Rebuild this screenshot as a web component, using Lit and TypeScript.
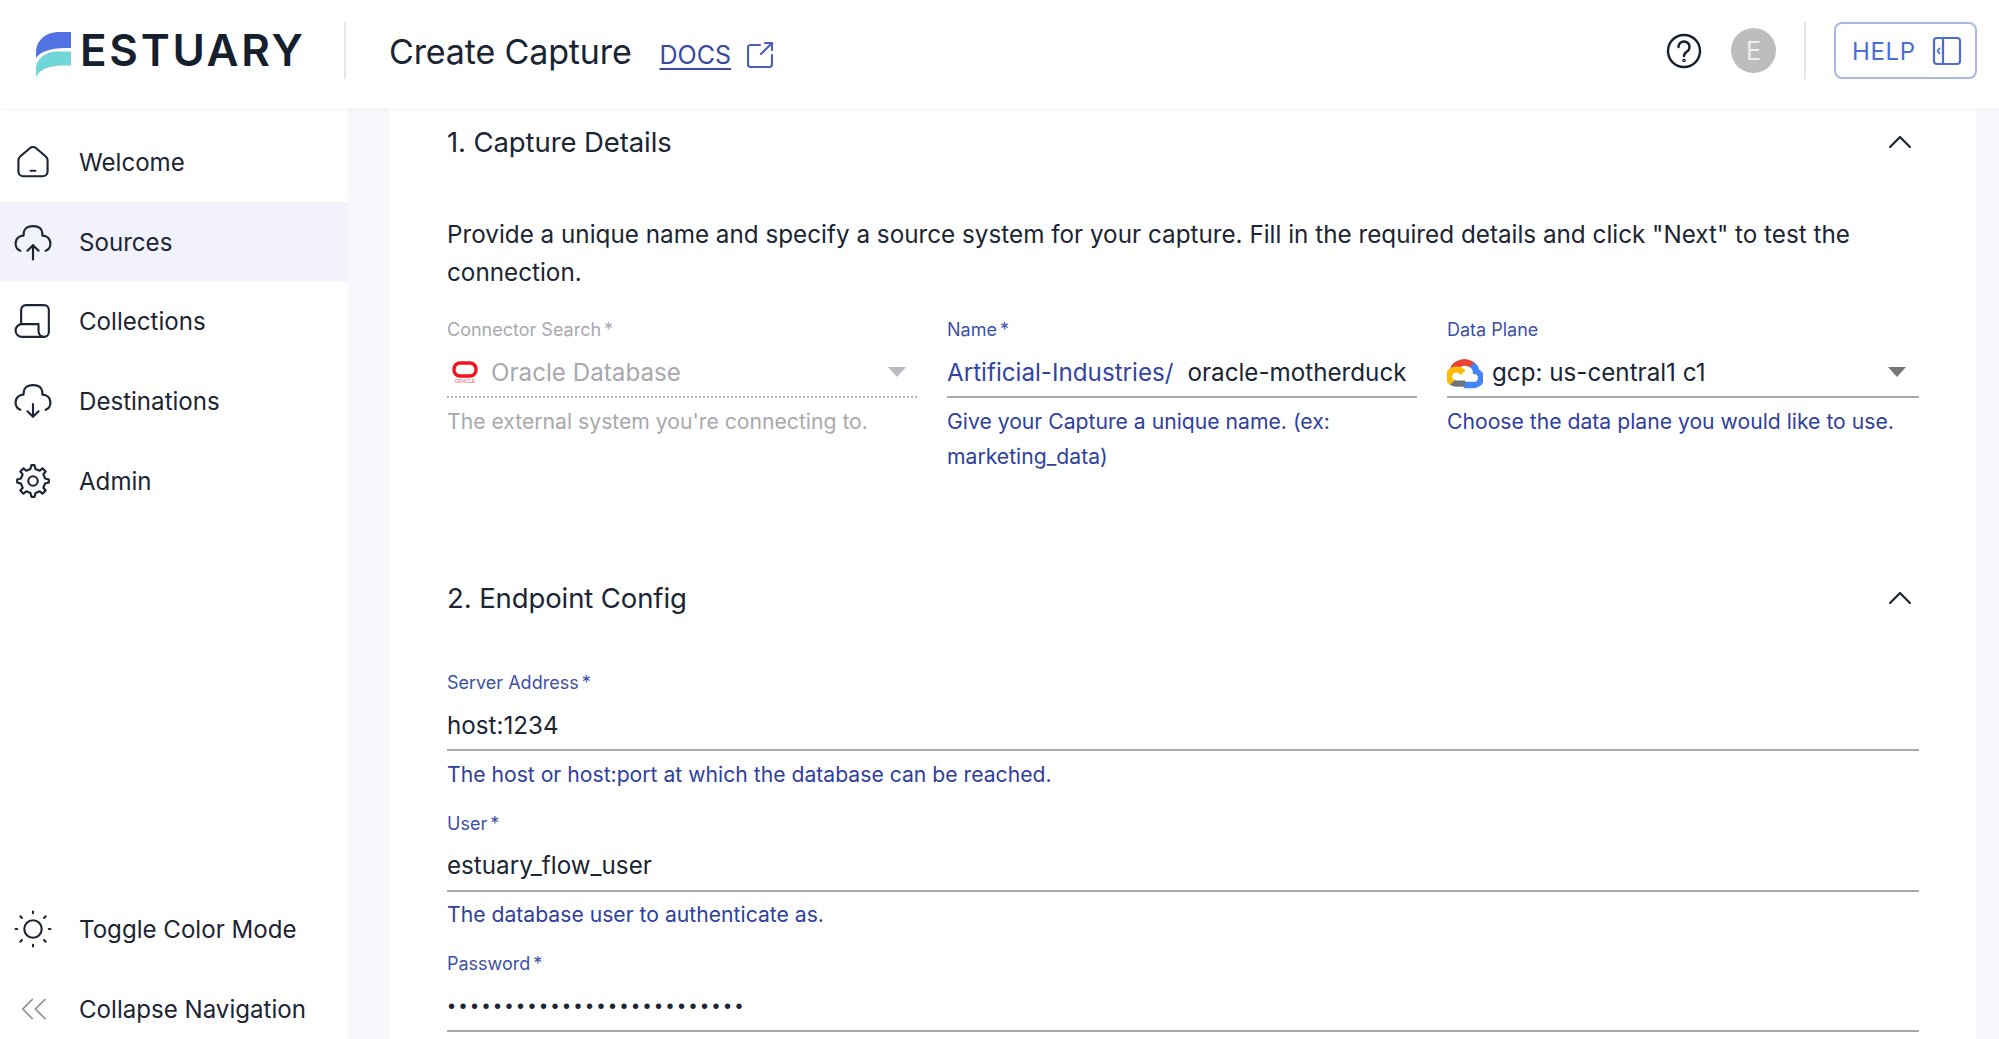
import { LitElement, html, css, svg } from "lit";
import { customElement } from "lit/decorators.js";

const icon = (body: unknown, cls = "nav-icon") =>
  html`<svg class=${cls} viewBox="0 0 24 24" fill="none" stroke="currentColor" stroke-width="1.35" stroke-linecap="round" stroke-linejoin="round">${body}</svg>`;

const CLOUD = "M20 17.6c1.5-.6 3-2 3-4.6 0-4-3.3-5-5-5 0-2 0-6-6-6S6 6 6 8c-1.7 0-5 1-5 5 0 2.6 1.5 4 3 4.6";

const NAV = [
  { label: "Welcome", body: svg`<path d="M2.800 11c0-1 .4-1.900 1.100-2.500L10 3.300a3 3 0 0 1 4 0l6.100 5.200c.7.600 1.100 1.500 1.100 2.500v7a3 3 0 0 1-3 3H5.800a3 3 0 0 1-3-3z"/><path d="M10.500 17.500h3"/>` },
  { label: "Sources", active: true, body: svg`<path d="M12 23v-9m0 0 3.500 3.500M12 14l-3.500 3.500"/><path d=${CLOUD}/>` },
  { label: "Collections", body: svg`<path d="M4.500 14V5a3 3 0 0 1 3-3H19a3 3 0 0 1 3 3v14a3 3 0 0 1-3 3H5a4 4 0 0 1 0-8h10.500"/><path d="M19 22a3.600 3.600 0 0 1-3.500-3.500V15"/>` },
  { label: "Destinations", body: svg`<path d="M12 14v8m0 0 3.500-3.500M12 22l-3.500-3.500"/><path d=${CLOUD}/>` },
  { label: "Admin", body: svg`<circle cx="12" cy="12" r="3"/><path d="M19.622 10.395l-1.097-2.65L20 6l-2-2-1.735 1.483-2.707-1.113L12.935 2h-1.954l-.632 2.401-2.645 1.115L6 4 4 6l1.453 1.789-1.08 2.657L2 11v2l2.401.655L5.516 16.3 4 18l2 2 1.791-1.46 2.606 1.072L11 22h2l.604-2.387 2.651-1.098C16.697 18.831 18 20 18 20l2-2-1.484-1.75 1.098-2.652 2.386-.62V11l-2.378-.605z"/>` },
];

const NAV_BOTTOM = [
  { label: "Toggle Color Mode", body: svg`<circle cx="12" cy="12" r="5.500"/><path d="M22 12h1M12 2V1M12 23v-1M20 20l-1-1M20 4l-1 1M4 20l1-1M4 4l1 1M1 12h1"/>` },
  { label: "Collapse Navigation", muted: true, body: svg`<path d="M11.500 6l-6 6 6 6M19.500 6l-6 6 6 6"/>` },
];

@customElement("app-root")
export class AppRoot extends LitElement {
  static styles = css`
    :host {
      display: flex;
      flex-direction: column;
      width: 1999px;
      height: 1039px;
      overflow: hidden;
      background: #f8f8fc;
      font-family: Inter, "Liberation Sans", sans-serif;
      color: #1b2533;
    }
    .top {
      height: 108px;
      flex: none;
      box-sizing: border-box;
      padding-bottom: 7px;
      display: flex;
      align-items: center;
      background: #fff;
      box-shadow: 0 1px 4px rgba(20, 30, 80, 0.05);
      position: relative;
      z-index: 1;
    }
    .logo-wrap {
      width: 344px;
      flex: none;
      display: flex;
      align-items: center;
      padding: 8px 0 0 36px;
      box-sizing: border-box;
      height: 100%;
    }
    .logo-mark { width: 35px; height: 45px; flex: none; margin-right: 9px; }
    .logo-text {
      font-size: 44px;
      font-weight: 600;
      letter-spacing: 2.7px;
      line-height: 1;
      color: #14202e;
      margin-top: -10px;
    }
    .vr { width: 2px; height: 57px; background: #e6e7ec; flex: none; }
    .title { font-size: 34px; font-weight: 400; margin-left: 43px; letter-spacing: -0.14px; margin-top: 2px; }
    .docs {
      font-size: 25px;
      color: #3949a3;
      text-decoration: underline;
      text-underline-offset: 4px;
      text-decoration-thickness: 2px;
      margin-left: 28px;
      margin-top: 9px;
    }
    .ext { width: 26px; height: 26px; margin-left: 16px; color: #4a5fc0; flex: none; margin-top: 9px; }
    .right { margin-left: auto; display: flex; align-items: center; margin-right: 22px; }
    .help-ico { width: 36px; height: 36px; color: #14202e; flex: none; }
    .avatar {
      width: 45px;
      height: 45px;
      border-radius: 50%;
      background: #bdbdbd;
      color: #eee;
      display: flex;
      align-items: center;
      justify-content: center;
      font-size: 25px;
      margin-left: 29px;
      margin-right: 28px;
    }
    .help-btn {
      margin-left: 28px;
      width: 143px;
      height: 57px;
      box-sizing: border-box;
      border: 2px solid #a9b6e6;
      border-radius: 8px;
      display: flex;
      align-items: center;
      padding: 2px 0 0 16px;
      color: #4c6cdc;
      font-size: 24px;
      letter-spacing: 0.6px;
    }
    .panel { width: 30px; height: 30px; margin: -2px 0 0 16px; flex: none; }

    .body { flex: 1; display: flex; min-height: 0; }
    nav {
      width: 348px;
      flex: none;
      background: #fff;
      display: flex;
      flex-direction: column;
      padding-top: 14px;
      box-sizing: border-box;
      height: 931px;
    }
    .spacer { flex: 1; }
    .nav-item {
      height: 79.7px;
      flex: none;
      display: flex;
      align-items: center;
      padding-left: 14px;
      gap: 27px;
      font-size: 24.1px;
    }
    .nav-item span { padding-top: 1px; }
    .nav-item.active { background: #f1f2fb; }
    .nav-item.muted svg { color: #8a8f96; stroke-width: 1.1; }
    .nav-icon { width: 38px; height: 38px; flex: none; color: #1b2533; }
    .bottom-nav { margin-bottom: -10px; }

    main {
      margin-left: 42px;
      width: 1586px;
      flex: none;
      background: #fff;
      box-sizing: border-box;
      padding: 0 57px;
    }
    .sec-head {
      height: 68px;
      display: flex;
      align-items: center;
      justify-content: space-between;
      font-size: 27.5px;
      letter-spacing: -0.1px;
      box-sizing: border-box;
    }
    .chev { width: 34px; height: 34px; color: #1b2533; margin-right: 2px; stroke-width: 1.6; }
    .intro {
      margin: 40px 0 0;
      font-size: 24.25px;
      line-height: 37.5px;
    }
    .cols {
      display: grid;
      grid-template-columns: 470px 470px 472px;
      column-gap: 30px;
      margin-top: 27px;
      height: 229px;
    }
    .cols .val { height: 56.3px; padding-top: 6px; }
    .cols .hint { margin-top: 6px; }
    .field { min-width: 0; }
    .stack .field { margin-bottom: 20px; }
    .lbl {
      height: 24px;
      line-height: 24px;
      font-size: 18px;
      color: #3d4fa6;
    }
    .lbl b { font-weight: 400; margin-left: 3px; }
    .val {
      height: 56px;
      box-sizing: border-box;
      border-bottom: 2px solid #a9a9ab;
      display: flex;
      align-items: center;
      font-size: 24.2px;
      padding-top: 6.6px;
    }
    .hint {
      margin-top: 5.5px;
      font-size: 21.17px;
      line-height: 35px;
      color: #2f40a0;
    }
    .disabled .lbl, .disabled .val, .disabled .hint { color: #a7a9ae; }
    .disabled .val { border-bottom: 2px dotted #b5b5b8; }
    .caret {
      width: 0;
      height: 0;
      border-left: 9px solid transparent;
      border-right: 9px solid transparent;
      border-top: 10px solid #73777c;
      margin-left: auto;
    }
    .disabled .caret { border-top-color: #b9bbbf; margin-right: 11px; }
    .plane .caret { margin-right: 13px; }
    .oracle { width: 26px; height: 24px; margin: 0 13px 0 5px; flex: none; }
    .gcp { width: 36px; height: 33px; margin: 0 9px 0 0; flex: none; }
    .prefix { color: #3344a6; margin-right: 14px; }
    .dots { letter-spacing: 4.5px; font-size: 20px; padding-left: 1px; font-family: "Liberation Sans", sans-serif; }
    .stack { margin-top: 39px; }
  `;

  private navItem(i: { label: string; body: unknown; active?: boolean; muted?: boolean }) {
    return html`<div class="nav-item ${i.active ? "active" : ""} ${i.muted ? "muted" : ""}">
      ${icon(i.body)}<span>${i.label}</span>
    </div>`;
  }

  private field(label: string, value: string, hint: string, req = true) {
    return html`<div class="field">
      <div class="lbl">${label}${req ? html`<b>*</b>` : ""}</div>
      <div class="val">${value}</div>
      <div class="hint">${hint}</div>
    </div>`;
  }

  render() {
    const chev = icon(svg`<path d="M5 15.500l7-7 7 7"/>`, "chev");
    return html`
      <header class="top">
        <div class="logo-wrap">
          <svg class="logo-mark" viewBox="0 0 35 45">
            <path fill="#5272e2" d="M35 0v16C20 16 6 17 0 26v-7C1 8 9 1 21 0z"/>
            <path fill="#70d6d8" d="M35 19.500v14C20 33 5 34 0 45v-8c0-9 8-17 20-17.500z"/>
          </svg>
          <span class="logo-text">ESTUARY</span>
        </div>
        <div class="vr"></div>
        <span class="title">Create Capture</span>
        <span class="docs">DOCS</span>
        <svg class="ext" viewBox="0 0 26 26" fill="none" stroke="currentColor" stroke-width="2.2" stroke-linecap="round" stroke-linejoin="round">
          <path d="M13 3H3.500A2.500 2.500 0 0 0 1 5.500v17A2.500 2.500 0 0 0 3.500 25h19a2.500 2.500 0 0 0 2.500-2.500V13"/>
          <path d="M14 12 25 1M18 1h7v7"/>
        </svg>
        <div class="right">
          <svg class="help-ico" viewBox="0 0 36 36" fill="none" stroke="currentColor" stroke-width="2.400" stroke-linecap="round">
            <circle cx="18" cy="18" r="16"/>
            <path d="M12.500 14a5.500 5.500 0 1 1 8.500 4.600c-2 1.300-3 2.300-3 4.400"/>
            <circle cx="18" cy="27.500" r="0.600"/>
          </svg>
          <div class="avatar">E</div>
          <div class="vr"></div>
          <div class="help-btn">HELP
            <svg class="panel" viewBox="0 0 30 30" fill="none" stroke="currentColor" stroke-width="2.200" stroke-linejoin="round" stroke-linecap="round">
              <rect x="2" y="2" width="26" height="26" rx="3"/>
              <path d="M11 2v26"/>
              <path d="M7.500 12.500 5.500 15l2 2.500" stroke-width="1.800"/>
            </svg>
          </div>
        </div>
      </header>
      <div class="body">
        <nav>
          ${NAV.map((i) => this.navItem(i))}
          <div class="spacer"></div>
          <div class="bottom-nav">${NAV_BOTTOM.map((i) => this.navItem(i))}</div>
        </nav>
        <main>
          <div class="sec-head"><span>1. Capture Details</span>${chev}</div>
          <p class="intro">Provide a unique name and specify a source system for your capture. Fill in the required details and click "Next" to test the connection.</p>
          <div class="cols">
            <div class="field disabled">
              <div class="lbl">Connector Search<b>*</b></div>
              <div class="val">
                <svg class="oracle" viewBox="0 0 26 24">
                  <rect x="2" y="3" width="22" height="13" rx="6" fill="none" stroke="#f0151c" stroke-width="3.4"/>
                  <text x="13" y="22.500" font-size="5" fill="#e8606a" text-anchor="middle" font-family="Liberation Sans">ORACLE</text>
                </svg>
                Oracle Database<span class="caret"></span>
              </div>
              <div class="hint">The external system you're connecting to.</div>
            </div>
            <div class="field">
              <div class="lbl">Name<b>*</b></div>
              <div class="val"><span class="prefix">Artificial-Industries/</span>oracle-motherduck</div>
              <div class="hint">Give your Capture a unique name. (ex: marketing_data)</div>
            </div>
            <div class="field plane">
              <div class="lbl">Data Plane</div>
              <div class="val">
                <svg class="gcp" viewBox="0 0 24 24" preserveAspectRatio="none">
                  <path fill="#ea4335" d="M15.2 8.100h.8l2.300-2.300.1-1A10.300 10.300 0 0 0 1.700 9.800c.3-.1.800 0 1.100 0l4.600-.8s.2-.4.400-.3a5.700 5.700 0 0 1 7.400-.6z"/>
                  <path fill="#4285f4" d="M21.500 9.800a10.300 10.300 0 0 0-3.100-5l-3.200 3.200a5.700 5.700 0 0 1 2.100 4.500v.6a2.900 2.900 0 1 1 0 5.700h-5.700l-.6.6v3.400l.6.6h5.700a7.400 7.400 0 0 0 4.200-13.600z"/>
                  <path fill="#6f7479" d="M6.400 22.400h5.700v-4.600H6.400a2.900 2.900 0 0 1-1.200-.3l-.8.3-2.300 2.300-.2.800a7.400 7.400 0 0 0 4.500 1.500z"/>
                  <path fill="#fbbc05" d="M6.400 7.600A7.400 7.400 0 0 0 1.900 20.900l3.300-3.300a2.900 2.900 0 1 1 3.800-3.800l3.300-3.300a7.400 7.400 0 0 0-5.900-2.900z"/>
                </svg>
                gcp: us-central1 c1<span class="caret"></span>
              </div>
              <div class="hint">Choose the data plane you would like to use.</div>
            </div>
          </div>
          <div class="sec-head" style="margin-top: 17px"><span>2. Endpoint Config</span>${chev}</div>
          <div class="stack">
            ${this.field("Server Address", "host:1234", "The host or host:port at which the database can be reached.")}
            ${this.field("User", "estuary_flow_user", "The database user to authenticate as.")}
            <div class="field">
              <div class="lbl">Password<b>*</b></div>
              <div class="val"><span class="dots">••••••••••••••••••••••••••</span></div>
            </div>
          </div>
        </main>
      </div>
    `;
  }
}
